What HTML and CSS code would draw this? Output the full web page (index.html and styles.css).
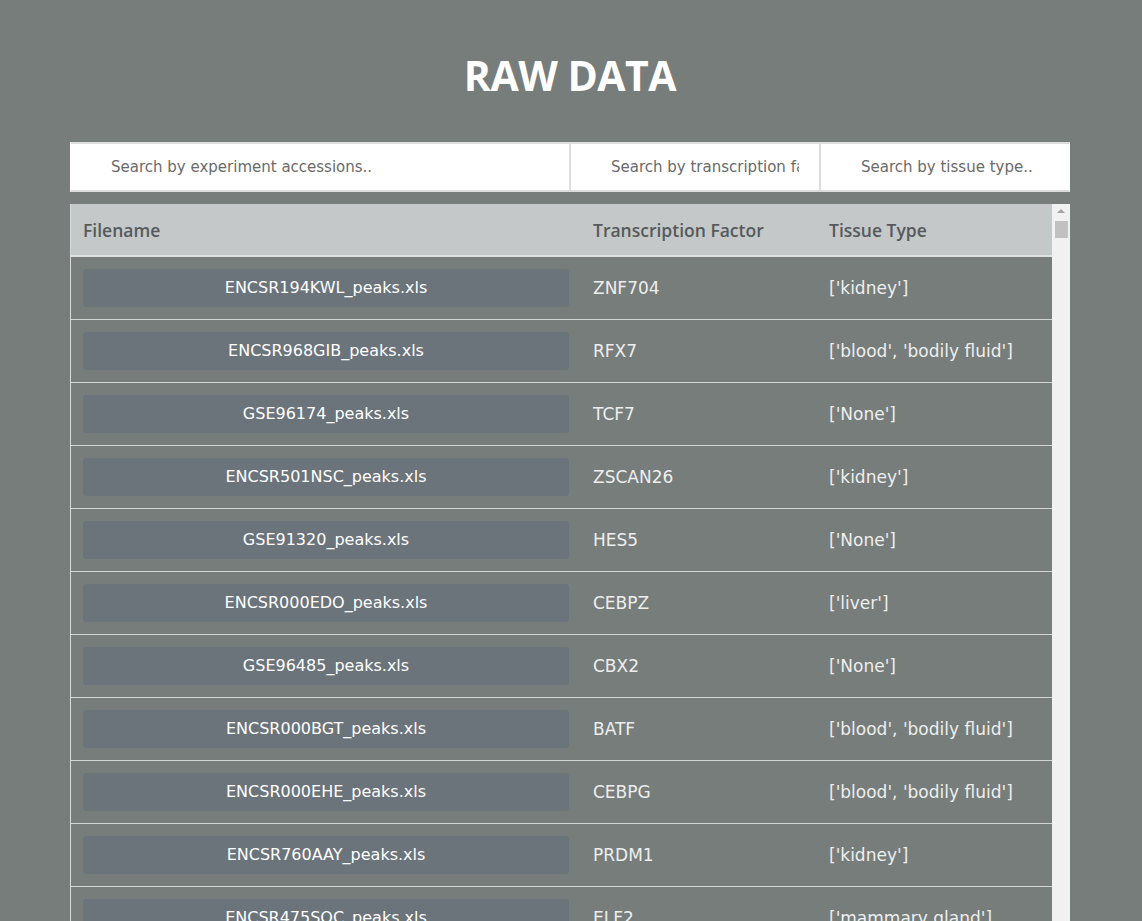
FILE: index.html
```html
<!DOCTYPE html>
<html>
<head>
<meta charset="utf-8">
<title>Raw Data</title>
<link rel="stylesheet" href="styles.css">
</head>
<body>
<div class="page">
  <h1 class="title">RAW DATA</h1>
  <div class="search">
    <input class="search-input wide" type="text" placeholder="Search by experiment accessions..">
    <input class="search-input" type="text" placeholder="Search by transcription factor..">
    <input class="search-input" type="text" placeholder="Search by tissue type..">
  </div>
  <div class="table-wrap">
    <div class="table">
      <div class="row head">
        <div class="cell">Filename</div>
        <div class="cell">Transcription Factor</div>
        <div class="cell">Tissue Type</div>
      </div>
      <div class="row"><div class="cell"><span class="file">ENCSR194KWL_peaks.xls</span></div><div class="cell">ZNF704</div><div class="cell">['kidney']</div></div>
      <div class="row"><div class="cell"><span class="file">ENCSR968GIB_peaks.xls</span></div><div class="cell">RFX7</div><div class="cell">['blood', 'bodily fluid']</div></div>
      <div class="row"><div class="cell"><span class="file">GSE96174_peaks.xls</span></div><div class="cell">TCF7</div><div class="cell">['None']</div></div>
      <div class="row"><div class="cell"><span class="file">ENCSR501NSC_peaks.xls</span></div><div class="cell">ZSCAN26</div><div class="cell">['kidney']</div></div>
      <div class="row"><div class="cell"><span class="file">GSE91320_peaks.xls</span></div><div class="cell">HES5</div><div class="cell">['None']</div></div>
      <div class="row"><div class="cell"><span class="file">ENCSR000EDO_peaks.xls</span></div><div class="cell">CEBPZ</div><div class="cell">['liver']</div></div>
      <div class="row"><div class="cell"><span class="file">GSE96485_peaks.xls</span></div><div class="cell">CBX2</div><div class="cell">['None']</div></div>
      <div class="row"><div class="cell"><span class="file">ENCSR000BGT_peaks.xls</span></div><div class="cell">BATF</div><div class="cell">['blood', 'bodily fluid']</div></div>
      <div class="row"><div class="cell"><span class="file">ENCSR000EHE_peaks.xls</span></div><div class="cell">CEBPG</div><div class="cell">['blood', 'bodily fluid']</div></div>
      <div class="row"><div class="cell"><span class="file">ENCSR760AAY_peaks.xls</span></div><div class="cell">PRDM1</div><div class="cell">['kidney']</div></div>
      <div class="row"><div class="cell"><span class="file">ENCSR475SOC_peaks.xls</span></div><div class="cell">ELF2</div><div class="cell">['mammary gland']</div></div>
    </div>
    <div class="scrollbar">
      <div class="arrow"></div>
      <div class="thumb"></div>
    </div>
  </div>
</div>
</body>
</html>
```

FILE: styles.css
```css
* { box-sizing: border-box; }
html, body {
  margin: 0;
  padding: 0;
  background: #767d7b;
  overflow: hidden;
  height: 921px;
  font-family: "DejaVu Sans", "Open Sans", sans-serif;
}
.page {
  width: 1000px;
  margin: 0 0 0 70px;
  padding-top: 52px;
}
.title {
  margin: 0;
  height: 90px;
  text-align: center;
  color: #ffffff;
  font-family: "Open Sans", sans-serif;
  font-weight: 700;
  font-size: 41px;
  line-height: 46px;
  letter-spacing: -0.5px;
}
.search {
  display: flex;
  height: 50px;
  background: #fff;
}
.search-input {
  height: 50px;
  width: 250px;
  border: 2px solid #dcdcdc;
  border-left-width: 1px;
  border-right-width: 1px;
  padding: 0 20px 0 40px;
  background: #fff;
  font-family: "DejaVu Sans", sans-serif;
  font-size: 15px;
  color: #555;
  outline: none;
}
.search-input:first-child { border-left: 1px solid #fff; }
.search-input:last-child { border-right: 1px solid #fff; }
.search-input.wide { width: 500px; }
.search-input::placeholder { color: #6a6a6a; }
.table-wrap {
  margin-top: 12px;
  display: flex;
  align-items: stretch;
  height: 740px;
}
.table {
  flex: 1;
  border-left: 1px solid #d6d9d9;
}
.scrollbar {
  width: 18px;
  flex: none;
  background: #f1f1f1;
  display: flex;
  flex-direction: column;
  align-items: center;
}
.arrow {
  margin-top: 5px;
  width: 0;
  height: 0;
  border-left: 4px solid transparent;
  border-right: 4px solid transparent;
  border-bottom: 4px solid #a3a3a3;
}
.thumb {
  margin-top: 8px;
  width: 13px;
  height: 17px;
  background: #c1c1c1;
}
.row {
  display: grid;
  grid-template-columns: 510px 236px 1fr;
  height: 63px;
  align-items: center;
  border-bottom: 1px solid #d3d6d6;
  color: #eeeeee;
  font-size: 17px;
}
.row.head {
  height: 53px;
  background: #c5c8c9;
  color: #555a5c;
  font-family: "Open Sans", sans-serif;
  font-weight: 600;
  font-size: 17.5px;
  border-bottom: 2px solid #dfe1e1;
}
.cell {
  padding: 0 12px;
  white-space: nowrap;
}
.cell.tf { font-size: 18px; }
.file {
  display: block;
  height: 38px;
  line-height: 38px;
  background: #6b737b;
  border-radius: 4px;
  text-align: center;
  color: #ffffff;
  font-size: 16px;
}
```
